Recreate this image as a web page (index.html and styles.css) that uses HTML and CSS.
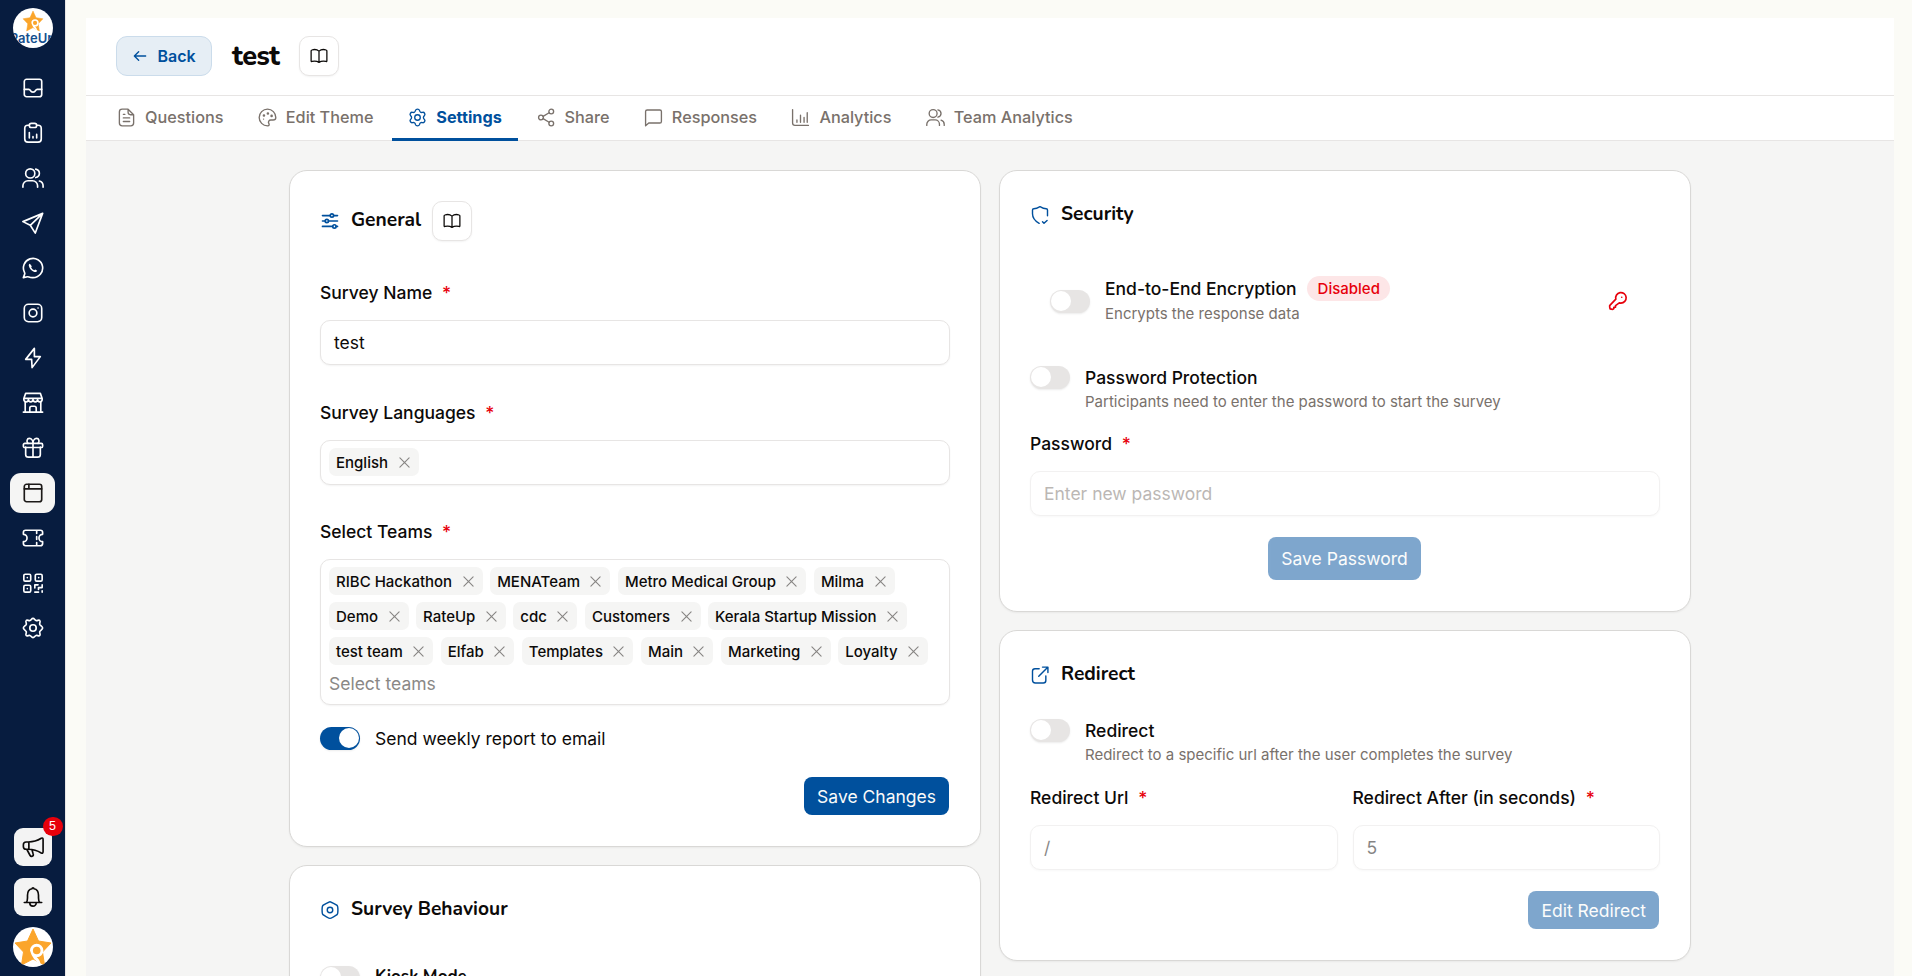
FILE: index.html
```html
<!DOCTYPE html>
<html lang="en">
<head>
    <meta charset="UTF-8">
    <meta name="viewport" content="width=device-width, initial-scale=1.0">
    <title>test - Settings</title>
    <link rel="stylesheet" href="styles.css">
</head>
<body>
    <!-- icon sprite -->
    <svg class="sprite">
        <symbol id="i-inbox" viewBox="0 0 24 24"><rect x="2.5" y="2.5" width="19" height="19" rx="2.5"/><path d="M21.5 13.5h-4.9c-.9 0-1.5.7-1.9 1.4-.4.9-1.2 1.6-2.7 1.6s-2.3-.7-2.7-1.6c-.4-.7-1-1.4-1.9-1.4H2.5"/></symbol>
        <symbol id="i-clipboard" viewBox="0 0 24 24"><path d="M8 3.500H6.500Q3 3.500 3 7v11.500Q3 22 6.500 22h11q3.500 0 3.500-3.500V7q0-3.500-3.500-3.500H16"/><rect x="8" y="1.500" width="8" height="4.500" rx="2.200"/><path d="M8 17.500v-6M12 17.500v-1.500M16 17.500v-4"/></symbol>
        <symbol id="i-users" viewBox="0 0 24 24"><circle cx="9" cy="7" r="5"/><path d="M15 11.500a5 4.700 0 0 0 0-9.200M1 22v-1.500A5.500 5.500 0 0 1 6.500 15h5a5.500 5.500 0 0 1 5.500 5.500V22M19 15.300c2.500.8 4 2.900 4 5.200V22"/></symbol>
        <symbol id="i-send" viewBox="0 0 24 24"><path d="M22.500 1.500 1 10.500 9 14.500 14.500 23zM22.500 1.500 9 14.500"/></symbol>
        <symbol id="i-whatsapp" viewBox="0 0 24 24"><path d="M12 22.500A10.500 10.500 0 1 0 2.800 17c.3.600.3 1.200.1 1.700L1.500 22.500l4.400-.9c.6-.1 1.100 0 1.600.2a10.500 10.500 0 0 0 4.500.7z"/><path d="M8.600 7.300c-1 .3-1.400 1.300-1.100 2.400.8 3 3 5.500 6 6.600 1.200.4 2.600 0 3.100-1.300L14.500 13.600l-1.200.9c-1.400-.6-2.500-1.600-3.300-3l.7-1.300z" fill="currentColor" stroke="none"/></symbol>
        <symbol id="i-instagram" viewBox="0 0 24 24"><rect x="2.500" y="2.500" width="19" height="19" rx="4.500"/><circle cx="12" cy="12" r="4.200"/><path d="M17.500 6.500h.01"/></symbol>
        <symbol id="i-flash" viewBox="0 0 24 24"><path d="M13.500 1.500 4 13.500h6.500L11 22.500l9-12h-6.500z"/></symbol>
        <symbol id="i-store" viewBox="0 0 24 24"><path d="M3.500 11v10.500M20.500 11v10.500M1.500 22h21M8.500 21.500V17.500q0-2 2-2h3q2 0 2 2v4"/><path d="M4 1.500h16l2 5.500v1.300a2.500 2.500 0 0 1-5 0 2.500 2.500 0 0 1-5 0 2.500 2.500 0 0 1-5 0 2.500 2.500 0 0 1-5 0V7zM2.500 7h19"/></symbol>
        <symbol id="i-gift" viewBox="0 0 24 24"><path d="M4 11v8q0 3 3 3h10q3 0 3-3v-8M12 7v15"/><rect x="1.500" y="7" width="21" height="4.500" rx="1.500"/><path d="M12 7C12 4 10.500 1.500 8 1.500S4.500 5 6.500 7M12 7c0-3 1.500-5.500 4-5.500S19.500 5 17.500 7"/></symbol>
        <symbol id="i-browser" viewBox="0 0 24 24"><rect x="2.500" y="2.500" width="19" height="19" rx="2.500"/><path d="M2.500 7.500h19M7.500 2.500v5"/></symbol>
        <symbol id="i-ticket" viewBox="0 0 24 24"><path d="M1.500 8V6q0-2.500 2.500-2.500h16q2.500 0 2.500 2.500v2a4 4 0 0 0 0 8v2q0 2.500-2.500 2.500H4q-2.500 0-2.500-2.500v-2a4 4 0 0 0 0-8zM16 3.500V7M16 10.500v3M16 17v3.500"/></symbol>
        <symbol id="i-qr" viewBox="0 0 24 24"><rect x="2" y="2.500" width="7.500" height="7.500" rx="1.500"/><rect x="14.500" y="2.500" width="7.500" height="7.500" rx="1.500"/><rect x="2" y="14.500" width="7.500" height="7.500" rx="1.500"/><path d="M5.800 6.200h.01M18.200 6.200h.01M5.800 18.200h.01M14 14v3.500M14 14h3.500M22 14v3h-4v2M14 22h4M22 20.500V22"/></symbol>
        <symbol id="i-gear" viewBox="0 0 24 24"><path d="M12 1.500c1.700 0 1.900 2 3.400 2.400 1.500.3 3-1.200 4-.1 1.100 1.100-.4 2.600-.1 4.100.4 1.600 3.200 2.400 3.200 4.100s-2.800 2.500-3.200 4.100c-.3 1.500 1.200 3 .1 4.100-1 1.100-2.500-.4-4-.1C13.900 20.500 13.700 22.500 12 22.500s-1.900-2-3.400-2.400c-1.500-.3-3 1.200-4 .1-1.100-1.100.4-2.600.1-4.100C4.300 14.500 1.500 13.700 1.500 12s2.800-2.500 3.200-4.100c.3-1.500-1.200-3-.1-4.100 1-1.100 2.500.4 4 .1C10.100 3.500 10.300 1.500 12 1.500z"/><circle cx="12" cy="12" r="3.500"/></symbol>
        <symbol id="i-megaphone" viewBox="0 0 24 24"><path d="M7 6.500C12 6.500 17 5 21 2.500Q23 1.500 23 4v13q0 2.500-2 1.500C17 16 12 14.500 7 14.500H4.500q-3 0-3-3v-2q0-3 3-3zM7.500 6.500v8M5.500 15l3.200 6c1.200 2.200 4.300 1 3.500-1.300L11 15.500"/></symbol>
        <symbol id="i-bell" viewBox="0 0 24 24"><path d="M2.500 18h19M4.500 18c1.200-1 1.500-3 1.500-5V10c0-3.500 2-6.500 5-7a1 1 0 0 1 2 0c3 .5 5 3.500 5 7v3c0 2 .3 4 1.500 5M8.500 18.500a3.500 3.500 0 0 0 7 0"/></symbol>
        <symbol id="i-back" viewBox="0 0 24 24"><path d="M4 12h16.500M10 5.500 3.500 12l6.500 6.500"/></symbol>
        <symbol id="i-book" viewBox="0 0 24 24"><path d="M12 5.500C9.500 3.300 5.500 3 2.500 4Q1.500 4.300 1.500 5.300V18.500q0 1 1.100.800c3.400-.8 6.900-.4 9.400 1.200 2.500-1.600 6-2 9.400-1.200q1.100.2 1.100-.8V5.300Q22.500 4.300 21.500 4C18.500 3 14.500 3.300 12 5.500zM12 5.500v15"/></symbol>
        <symbol id="i-file" viewBox="0 0 24 24"><path d="M14 1.500H6.500Q3 1.500 3 5v14q0 3.500 3.500 3.500h11Q21 22.500 21 19V8.500zM14 1.500v4q0 3 3 3h4M8 8h2M8 12.500h8M8 17h8"/></symbol>
        <symbol id="i-palette" viewBox="0 0 24 24"><path d="M22.500 12A10.500 10.500 0 1 0 12 22.500c2.500 0 2.500-1.500 1.500-3.300-1-2 .4-4 2.700-4H19c2.200 0 3.500-1.200 3.500-3.200z"/><path d="M7 14h.01"/><circle cx="7.500" cy="9.500" r=".8"/><circle cx="12.500" cy="7" r=".8"/><circle cx="17.200" cy="10" r=".8"/></symbol>
        <symbol id="i-settings" viewBox="0 0 24 24"><path d="M9.500 3Q10 1.500 12 1.500T14.500 3c.6 2.300 1.800 3 3.700 2.500q1.900-.4 2.800 1.200 1 1.700-.4 3c-1.500 1.500-1.500 3.100 0 4.600q1.400 1.300.4 3-.9 1.600-2.800 1.200c-1.900-.5-3.100.2-3.700 2.500Q14 22.500 12 22.500T9.500 21c-.6-2.300-1.800-3-3.700-2.500q-1.900.4-2.800-1.200-1-1.700.4-3c1.500-1.500 1.500-3.100 0-4.600q-1.400-1.300-.4-3 .9-1.600 2.800-1.200C7.700 6 8.900 5.300 9.500 3z"/><circle cx="12" cy="12" r="3.500"/></symbol>
        <symbol id="i-share" viewBox="0 0 24 24"><circle cx="18" cy="4.500" r="3"/><circle cx="5" cy="12" r="3"/><circle cx="18" cy="19.500" r="3"/><path d="M7.700 10.500 15.300 6M7.700 13.500l7.600 4.500"/></symbol>
        <symbol id="i-message" viewBox="0 0 24 24"><path d="M2 22.500V4.500q0-2 2-2h16q2 0 2 2V17q0 2-2 2H6z"/></symbol>
        <symbol id="i-chart" viewBox="0 0 24 24"><path d="M2 2v17q0 3 3 3h17M7.500 18v-3M12 18V9M16.500 18v-6M20.500 18V6"/></symbol>
        <symbol id="i-sliders" viewBox="0 0 24 24"><path d="M3 5.500h9M16.500 5.500H21M3 12h3M10.500 12H21M3 18.500h12M19.500 18.500H21"/><circle cx="14.300" cy="5.500" r="2"/><circle cx="8.200" cy="12" r="2"/><circle cx="17.300" cy="18.500" r="2"/></symbol>
        <symbol id="i-shield" viewBox="0 0 24 24"><path d="M11 22C6.500 19.500 3 16 3 10.500V6q0-1.500 1.500-1.500C7.500 4.500 9.500 3.500 12 2c2.500 1.500 4.500 2.500 7.500 2.500Q21 4.500 21 6v7M15 20l1.800 2 3.700-3.500"/></symbol>
        <symbol id="i-link" viewBox="0 0 24 24"><path d="M11 4.500H6q-3 0-3 3v10.500q0 3.500 3.500 3.500H16q3 0 3-3V13M15 2.500h6.500V9M21 3 10.500 13.500"/></symbol>
        <symbol id="i-hexagon" viewBox="0 0 24 24"><path d="M12 2c1 0 7.500 3.600 8.500 4.400 1 .8 1 1.600 1 5.600s0 4.800-1 5.600c-1 .8-7.500 4.400-8.500 4.400s-7.500-3.600-8.500-4.400c-1-.8-1-1.600-1-5.600s0-4.800 1-5.600C4.500 5.600 11 2 12 2z"/><circle cx="12" cy="12" r="3.300"/></symbol>
        <symbol id="i-key" viewBox="0 0 24 24"><path d="M15.500 14.500a6.300 6.300 0 1 0-6.100-4.700L2.500 17q-.8.8-.5 2l.5 2.500 3 .5q1 0 1.500-.8V19.500h2V17.500l4.500-3.200q.9.200 2 .2zM16.500 7.500h.01"/></symbol>
        <symbol id="i-x" viewBox="0 0 24 24"><path d="M3.500 3.500l17 17M20.500 3.500l-17 17"/></symbol>
        <symbol id="i-star" viewBox="0 0 40 40"><path d="M20 2 25.500 14 38 16 29.500 25 31.500 38 20 32 8.500 38 10.500 25 2 16 14.500 14z" fill="#fba52b" stroke="#fba52b" stroke-linejoin="round"/><path d="M17 23.500a6.700 6.700 0 1 1 6.700 6.700q3 2 3.800 6.800-8-4-10.500-13.500z" fill="#fff" stroke="none"/><circle cx="23.700" cy="23.500" r="3.800" fill="#fba52b" stroke="none"/></symbol>
    </svg>

    <div class="app">
        <aside class="sidebar">
            <div class="logo">
                <svg class="logo-star"><use href="#i-star"/></svg>
                <span class="logo-name">RateUp</span>
            </div>
            <nav class="side-nav">
                <a class="side-item"><svg class="icon"><use href="#i-inbox"/></svg></a>
                <a class="side-item"><svg class="icon"><use href="#i-clipboard"/></svg></a>
                <a class="side-item"><svg class="icon"><use href="#i-users"/></svg></a>
                <a class="side-item"><svg class="icon"><use href="#i-send"/></svg></a>
                <a class="side-item"><svg class="icon"><use href="#i-whatsapp"/></svg></a>
                <a class="side-item"><svg class="icon"><use href="#i-instagram"/></svg></a>
                <a class="side-item"><svg class="icon"><use href="#i-flash"/></svg></a>
                <a class="side-item"><svg class="icon"><use href="#i-store"/></svg></a>
                <a class="side-item"><svg class="icon"><use href="#i-gift"/></svg></a>
                <a class="side-item active"><svg class="icon"><use href="#i-browser"/></svg></a>
                <a class="side-item"><svg class="icon"><use href="#i-ticket"/></svg></a>
                <a class="side-item"><svg class="icon"><use href="#i-qr"/></svg></a>
                <a class="side-item"><svg class="icon"><use href="#i-gear"/></svg></a>
            </nav>
            <div class="side-bottom">
                <button class="side-btn"><svg class="icon"><use href="#i-megaphone"/></svg><span class="count">5</span></button>
                <button class="side-btn"><svg class="icon"><use href="#i-bell"/></svg></button>
                <div class="avatar"><svg class="avatar-star"><use href="#i-star"/></svg></div>
            </div>
        </aside>

        <main class="main">
            <header class="header">
                <a class="back"><svg class="icon"><use href="#i-back"/></svg>Back</a>
                <h1 class="title">test</h1>
                <button class="book-btn"><svg class="icon"><use href="#i-book"/></svg></button>
            </header>
            <nav class="tabs">
                <a class="tab"><svg class="icon"><use href="#i-file"/></svg>Questions</a>
                <a class="tab"><svg class="icon"><use href="#i-palette"/></svg>Edit Theme</a>
                <a class="tab active"><svg class="icon"><use href="#i-settings"/></svg>Settings</a>
                <a class="tab"><svg class="icon"><use href="#i-share"/></svg>Share</a>
                <a class="tab"><svg class="icon"><use href="#i-message"/></svg>Responses</a>
                <a class="tab"><svg class="icon"><use href="#i-chart"/></svg>Analytics</a>
                <a class="tab"><svg class="icon"><use href="#i-users"/></svg>Team Analytics</a>
            </nav>

            <div class="content">
                <div class="column">
                    <section class="card general">
                        <div class="card-head">
                            <svg class="icon bold"><use href="#i-sliders"/></svg>
                            <h2>General</h2>
                            <button class="book-btn"><svg class="icon"><use href="#i-book"/></svg></button>
                        </div>
                        <div class="field">
                            <label>Survey Name <span class="req">*</span></label>
                            <div class="input">test</div>
                        </div>
                        <div class="field languages">
                            <label>Survey Languages <span class="req">*</span></label>
                            <div class="input chips">
                                <span class="chip">English<svg class="icon"><use href="#i-x"/></svg></span>
                            </div>
                        </div>
                        <div class="field">
                            <label>Select Teams <span class="req">*</span></label>
                            <div class="input chips">
                                <span class="chip">RIBC Hackathon<svg class="icon"><use href="#i-x"/></svg></span>
                                <span class="chip">MENATeam<svg class="icon"><use href="#i-x"/></svg></span>
                                <span class="chip">Metro Medical Group<svg class="icon"><use href="#i-x"/></svg></span>
                                <span class="chip">Milma<svg class="icon"><use href="#i-x"/></svg></span>
                                <span class="chip">Demo<svg class="icon"><use href="#i-x"/></svg></span>
                                <span class="chip">RateUp<svg class="icon"><use href="#i-x"/></svg></span>
                                <span class="chip">cdc<svg class="icon"><use href="#i-x"/></svg></span>
                                <span class="chip">Customers<svg class="icon"><use href="#i-x"/></svg></span>
                                <span class="chip">Kerala Startup Mission<svg class="icon"><use href="#i-x"/></svg></span>
                                <span class="chip">test team<svg class="icon"><use href="#i-x"/></svg></span>
                                <span class="chip">Elfab<svg class="icon"><use href="#i-x"/></svg></span>
                                <span class="chip">Templates<svg class="icon"><use href="#i-x"/></svg></span>
                                <span class="chip">Main<svg class="icon"><use href="#i-x"/></svg></span>
                                <span class="chip">Marketing<svg class="icon"><use href="#i-x"/></svg></span>
                                <span class="chip">Loyalty<svg class="icon"><use href="#i-x"/></svg></span>
                                <span class="chips-placeholder">Select teams</span>
                            </div>
                        </div>
                        <div class="report">
                            <span class="switch on"></span>
                            <span>Send weekly report to email</span>
                        </div>
                        <div class="actions">
                            <button class="btn">Save Changes</button>
                        </div>
                    </section>

                    <section class="card behaviour">
                        <div class="card-head">
                            <svg class="icon"><use href="#i-hexagon"/></svg>
                            <h2>Survey Behaviour</h2>
                        </div>
                        <div class="option">
                            <span class="switch"></span>
                            <h3>Kiosk Mode</h3>
                        </div>
                    </section>
                </div>

                <div class="column">
                    <section class="card security">
                        <div class="card-head">
                            <svg class="icon"><use href="#i-shield"/></svg>
                            <h2>Security</h2>
                        </div>
                        <div class="option encryption">
                            <span class="switch"></span>
                            <div class="option-text">
                                <div class="option-name">End-to-End Encryption <span class="pill">Disabled</span></div>
                                <div class="option-desc">Encrypts the response data</div>
                            </div>
                            <svg class="icon key"><use href="#i-key"/></svg>
                        </div>
                        <div class="option">
                            <span class="switch"></span>
                            <div class="option-text">
                                <div class="option-name">Password Protection</div>
                                <div class="option-desc">Participants need to enter the password to start the survey</div>
                            </div>
                        </div>
                        <div class="field">
                            <label>Password <span class="req">*</span></label>
                            <div class="input disabled placeholder">Enter new password</div>
                        </div>
                        <div class="actions center">
                            <button class="btn tall" disabled>Save Password</button>
                        </div>
                    </section>

                    <section class="card redirect">
                        <div class="card-head">
                            <svg class="icon"><use href="#i-link"/></svg>
                            <h2>Redirect</h2>
                        </div>
                        <div class="option">
                            <span class="switch"></span>
                            <div class="option-text">
                                <div class="option-name">Redirect</div>
                                <div class="option-desc">Redirect to a specific url after the user completes the survey</div>
                            </div>
                        </div>
                        <div class="field-row">
                            <div class="field">
                                <label>Redirect Url <span class="req">*</span></label>
                                <div class="input disabled">/</div>
                            </div>
                            <div class="field">
                                <label>Redirect After (in seconds) <span class="req">*</span></label>
                                <div class="input disabled">5</div>
                            </div>
                        </div>
                        <div class="actions">
                            <button class="btn" disabled>Edit Redirect</button>
                        </div>
                    </section>
                </div>
            </div>
        </main>
    </div>
</body>
</html>
```

FILE: styles.css
```css
* {
    box-sizing: border-box;
}
body {
    margin: 0;
    height: 976px;
    overflow: hidden;
    background: #fbfbf6;
    color: #0c0a09;
    font-family: Inter, "Liberation Sans", sans-serif;
    font-size: 17.5px;
    line-height: 27px;
}
h1, h2, h3 {
    margin: 0;
    font-family: Nunito, "Open Sans", sans-serif;
    font-weight: 700;
}
button {
    font-family: inherit;
    padding: 0;
}
.sprite {
    display: none;
}
.icon {
    width: 20px;
    height: 20px;
    flex: none;
    fill: none;
    stroke: currentColor;
    stroke-width: 1.7;
    stroke-linecap: round;
    stroke-linejoin: round;
}
.app {
    display: flex;
    height: 976px;
    overflow: hidden;
}

/* sidebar */
.sidebar {
    display: flex;
    flex-direction: column;
    align-items: center;
    width: 66px;
    flex: none;
    padding: 8px 0 9px;
    background: #071c3f;
    border-right: 1px solid #e7e5e4;
}
.logo {
    width: 40px;
    height: 40px;
    border-radius: 50%;
    background: #fff;
    overflow: hidden;
    display: flex;
    flex-direction: column;
    align-items: center;
}
.logo-star {
    width: 22px;
    height: 22px;
    margin-top: 2px;
    flex: none;
}
.logo-name {
    color: #15508f;
    font-size: 13px;
    font-weight: 600;
    line-height: 13px;
}
.side-nav {
    display: flex;
    flex-direction: column;
    gap: 5px;
    margin-top: 20px;
}
.side-item {
    display: flex;
    align-items: center;
    justify-content: center;
    width: 45px;
    height: 40px;
    border-radius: 11px;
    color: #fff;
}
.side-item .icon, .side-btn .icon {
    width: 22px;
    height: 22px;
    stroke-width: 1.8;
}
.side-item.active {
    background: #f5f5f4;
    color: #1c1917;
}
.side-bottom {
    display: flex;
    flex-direction: column;
    align-items: center;
    margin-top: auto;
}
.side-btn {
    position: relative;
    display: flex;
    align-items: center;
    justify-content: center;
    width: 38px;
    height: 38px;
    margin-bottom: 12px;
    border: 0;
    border-radius: 9px;
    background: #f3f3f3;
    color: #0c0a09;
}
.side-btn + .side-btn {
    margin-bottom: 11px;
}
.count {
    position: absolute;
    top: -11px;
    right: -11px;
    width: 20px;
    height: 19px;
    border-radius: 10px;
    background: #e7000b;
    color: #fff;
    font: 12.5px/18px "Liberation Sans", sans-serif;
}
.avatar {
    width: 40px;
    height: 40px;
    border-radius: 50%;
    background: #fff;
    overflow: hidden;
}
.avatar-star {
    display: block;
    width: 40px;
    height: 40px;
}

/* main */
.main {
    flex: 1;
    display: flex;
    flex-direction: column;
    margin: 18px 18px 0 20px;
    background: #f5f5f4;
}
.header {
    display: flex;
    flex: none;
    align-items: center;
    height: 78px;
    padding: 18px 30px 19px;
    background: #fff;
    border-bottom: 1px solid #e7e5e4;
}
.back {
    display: flex;
    align-items: center;
    justify-content: center;
    gap: 9px;
    width: 96px;
    height: 40px;
    border: 1px solid #cbdceb;
    border-radius: 11px;
    background: #e6eef5;
    color: #00509d;
    font-size: 16px;
    font-weight: 600;
}
.back .icon {
    width: 16px;
    height: 16px;
    stroke-width: 2;
}
.title {
    margin: 2px 20px 0;
    font-size: 27px;
    font-weight: 800;
    line-height: 36px;
    letter-spacing: -0.6px;
}
.book-btn {
    display: flex;
    align-items: center;
    justify-content: center;
    width: 40px;
    height: 40px;
    border: 1px solid #e7e5e4;
    border-radius: 10px;
    background: #fff;
    color: #0c0a09;
    box-shadow: 0 1px 2px rgba(0, 0, 0, 0.05);
}
.book-btn .icon {
    width: 18px;
    height: 18px;
}
.tabs {
    display: flex;
    flex: none;
    gap: 2.25px;
    height: 45px;
    padding: 0 15px;
    background: #fff;
    border-bottom: 1px solid #e7e5e4;
}
.tab {
    display: flex;
    align-items: center;
    gap: 9px;
    height: 45px;
    padding: 0 16px;
    border-bottom: 3px solid transparent;
    color: #79716b;
    font-size: 16.25px;
    font-weight: 500;
}
.tab .icon {
    width: 19px;
    height: 19px;
}
.tab.active {
    padding: 0 16.5px;
    color: #00509d;
    border-bottom-color: #00509d;
    font-weight: 700;
}
.content {
    display: flex;
    justify-content: center;
    gap: 18px;
    padding-top: 29px;
}
.column {
    display: flex;
    flex-direction: column;
    gap: 18px;
    width: 692px;
}
.card {
    padding: 30px;
    border: 1px solid #d9d8d6;
    border-radius: 18px;
    background: #fff;
    box-shadow: 0 1px 2px rgba(0, 0, 0, 0.05);
}
.card-head {
    display: flex;
    align-items: center;
    height: 27px;
}
.card-head > .icon {
    margin-right: 11px;
    color: #00509d;
}
.card-head > .icon.bold {
    stroke-width: 2;
}
.card-head h2 {
    font-size: 19.2px;
    line-height: 27px;
}
.card-head .book-btn {
    margin-left: 11px;
}

/* form parts */
label {
    display: block;
    font-weight: 500;
    line-height: 25px;
    margin-bottom: 15px;
}
.req {
    margin-left: 5px;
    color: #e7000b;
}
.input {
    height: 45px;
    padding: 0 13px;
    border: 1px solid #e7e5e4;
    border-radius: 10px;
    background: #fff;
    box-shadow: 0 1px 2px rgba(0, 0, 0, 0.05);
    line-height: 43px;
}
.input.disabled {
    opacity: 0.5;
}
.input.placeholder {
    color: #79716b;
}
.chips {
    display: flex;
    flex-wrap: wrap;
    gap: 7px 7.5px;
    height: auto;
    min-height: 45px;
    padding: 7px 8px 8px;
    line-height: 27px;
}
.chip {
    display: flex;
    align-items: center;
    height: 28px;
    padding: 0 8px 0 7px;
    border-radius: 7px;
    background: #f5f5f4;
    font-size: 15px;
    font-weight: 500;
}
.chip .icon {
    width: 13px;
    height: 13px;
    margin-left: 9.5px;
    color: #868482;
    stroke-width: 2;
}
.chips-placeholder {
    width: 100%;
    height: 24px;
    line-height: 24px;
    color: #8a8886;
}
.switch {
    width: 40px;
    height: 23px;
    flex: none;
    padding: 1px;
    border-radius: 12px;
    background: #e7e5e4;
    box-shadow: 0 1px 2px rgba(0, 0, 0, 0.08);
}
.switch::before {
    content: "";
    display: block;
    width: 20px;
    height: 20px;
    border-radius: 50%;
    background: #fff;
}
.switch.on {
    background: #00509d;
}
.switch.on::before {
    margin-left: 18px;
}
.actions {
    display: flex;
    justify-content: flex-end;
    padding-right: 1px;
}
.actions.center {
    justify-content: center;
}
.btn {
    height: 38px;
    padding: 0 13px;
    border: 0;
    border-radius: 8px;
    background: #00509d;
    color: #fafaf9;
    font-size: 17.5px;
}
.btn.tall {
    height: 43px;
}
.btn:disabled {
    opacity: 0.5;
}
.option {
    display: flex;
    align-items: flex-start;
    gap: 15px;
}
.option-text {
    flex: 1;
}
.option-name {
    display: flex;
    align-items: center;
    gap: 10.5px;
    height: 23px;
    font-weight: 500;
}
.option-desc {
    height: 25px;
    color: #79716b;
    font-size: 15px;
    line-height: 26px;
}
.pill {
    height: 25px;
    padding: 0 10.5px;
    border-radius: 13px;
    background: #fde6e7;
    color: #e7000b;
    font-size: 15px;
    line-height: 25px;
}

/* general */
.general {
    height: 677px;
}
.general .card-head {
    height: 40px;
}
.general .card-head h2 {
    margin-top: -1px;
}
.general .field {
    margin-bottom: 35px;
}
.general .languages {
    margin-bottom: 34px;
}
.general .card-head + .field {
    margin-top: 39px;
}
.report {
    display: flex;
    align-items: center;
    gap: 15px;
    height: 23px;
    margin-top: -13px;
}
.general .actions {
    margin-top: 27px;
}
.behaviour {
    height: 300px;
}
.behaviour .option {
    margin-top: 43px;
}
h3 {
    font-size: 17px;
    line-height: 21px;
}

/* security */
.security {
    height: 442px;
}
.encryption {
    align-items: center;
    height: 50px;
    margin: 48px 32px 40px 20px;
}
.encryption .option-desc {
    line-height: 28px;
}
.security .field {
    margin-top: 17px;
}
.security .actions {
    margin-top: 21px;
}
.key {
    color: #e7000b;
    stroke-width: 2;
}

/* redirect */
.redirect {
    height: 331px;
}
.redirect .option {
    margin-top: 31px;
}
.field-row {
    display: flex;
    gap: 15px;
    margin-top: 18px;
}
.field-row .field {
    flex: 1;
}
.redirect .actions {
    margin-top: 21px;
}
```
